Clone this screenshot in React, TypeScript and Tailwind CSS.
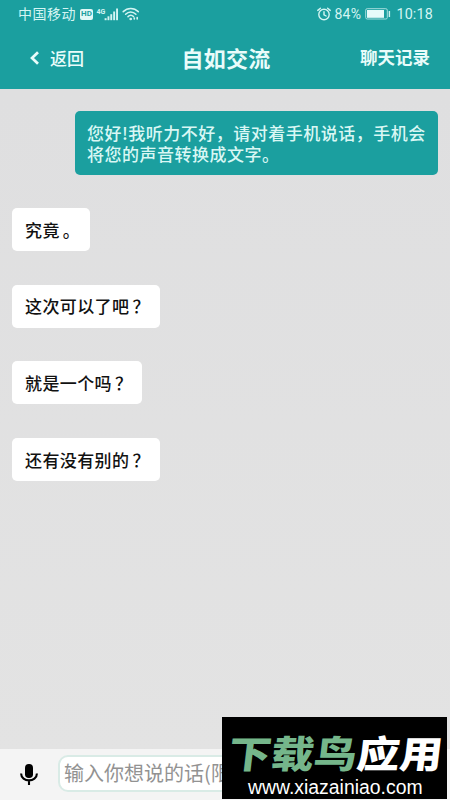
import type { ReactNode } from 'react';

const messages = [
  { text: '究竟', mark: '。' },
  { text: '这次可以了吧', mark: '？' },
  { text: '就是一个吗', mark: '？' },
  { text: '还有没有别的', mark: '？' },
];

function SignalIcon() {
  return (
    <svg width="24" height="15" viewBox="0 0 24 15" fill="#d4f5f3" className="ml-[3px]">
      <text x="0.5" y="6.5" fontSize="7" fontWeight="bold" fontFamily="Roboto, sans-serif">
        4G
      </text>
      <rect x="8.6" y="11.2" width="2" height="2" />
      <rect x="11.5" y="9.3" width="1.9" height="3.9" />
      <rect x="14.3" y="7.2" width="1.9" height="6" />
      <rect x="17.2" y="4.5" width="1.9" height="8.7" />
      <rect x="20.1" y="1.5" width="1.9" height="11.7" />
    </svg>
  );
}

function WifiIcon() {
  return (
    <svg
      width="18"
      height="14"
      viewBox="0 0 18 14"
      fill="none"
      stroke="#d4f5f3"
      strokeWidth="1.5"
      strokeLinecap="round"
      className="ml-[2px]">
      <path d="M1.2 4.6C5.5 0.3 12 0.3 16.3 4.6" />
      <path d="M3.6 7.2C6.6 4.1 10.8 4.1 13.9 7.2" />
      <path d="M6 9.6C7.8 7.8 9.8 7.8 11.5 9.6" />
      <circle cx="8.7" cy="12" r="0.6" fill="#d4f5f3" />
      <path d="M12.3 11v1M15.2 10.5v1.5" strokeWidth="1.6" />
    </svg>
  );
}

function AlarmIcon() {
  return (
    <svg
      width="14"
      height="14"
      viewBox="0 0 14 14"
      fill="none"
      stroke="#d4f5f3"
      strokeWidth="1.4"
      strokeLinecap="round">
      <circle cx="7" cy="7.5" r="5.2" />
      <path d="M7 4.8v3l2.1 1.2M0.8 3.4 3.4 1.2M10.6 1.2l2.6 2.2" />
    </svg>
  );
}

function MicIcon() {
  return (
    <svg width="20" height="24" viewBox="0 0 20 24" fill="none" className="ml-[19px]">
      <rect x="6" y="1" width="8" height="14" rx="3.8" fill="black" />
      <path d="M2.1 10.5c0 9.2 15.8 9.2 15.8 0M10 17.5V22" stroke="black" strokeWidth="2.1" />
    </svg>
  );
}

function Bubble({ children }: { children: ReactNode }) {
  return (
    <div className="flex h-[43px] items-center rounded-[5px] bg-white px-[13px] text-[17px] font-medium tracking-[0.4px] text-[#111] whitespace-nowrap">
      {children}
    </div>
  );
}

export default function App() {
  return (
    <div className="relative flex h-[800px] w-[450px] flex-col overflow-hidden bg-[#e1e1e1] font-['Noto_Sans_CJK_SC',sans-serif]">
      <header className="h-[89px] shrink-0 bg-[#1b9f9f]">
        <div className="flex h-[28px] items-center pl-[18px] pr-[17px] text-[#d4f5f3]">
          <span className="-mt-px text-[14px] tracking-[0.5px]">中国移动</span>
          <span className="ml-[4px] flex h-[11px] w-[13px] items-center justify-center rounded-[2px] bg-[#e0f8f7] font-[Roboto,sans-serif] text-[8px] font-bold text-[#1b9f9f]">
            HD
          </span>
          <SignalIcon />
          <WifiIcon />
          <div className="ml-auto flex items-center font-[Roboto,sans-serif] leading-[20px]">
            <AlarmIcon />
            <span className="ml-[3px] w-[29px] text-[14px] leading-[20px] tracking-[0.3px]">84%</span>
            <svg width="26" height="12" viewBox="0 0 26 12" className="ml-[2px]">
              <rect x="0.7" y="0.7" width="21.6" height="10.3" rx="1.5" fill="none" stroke="#a5dddd" />
              <rect x="2" y="2" width="17" height="7.8" fill="#e6fbfa" />
              <rect x="23.7" y="3" width="1.4" height="6" fill="#c9f1ef" />
            </svg>
            <span className="ml-[5px] text-[14.3px] leading-[20px] tracking-[0.2px]">10:18</span>
          </div>
        </div>
        <div className="grid h-[59px] grid-cols-3 items-center pl-[29px] pr-[20px] text-[#e9fcfa]">
          <div className="flex items-center">
            <svg width="12" height="14" viewBox="0 0 12 14" fill="none" stroke="#e9fcfa" strokeWidth="2.7">
              <path d="M9 1.2 3 7l6 5.8" />
            </svg>
            <span className="ml-[9px] text-[17px] font-medium">返回</span>
          </div>
          <h1 className="-ml-[7px] text-center text-[22px] font-bold tracking-[0.2px]">自如交流</h1>
          <span className="text-right text-[17.5px] font-bold">聊天记录</span>
        </div>
      </header>
      <main className="flex flex-1 flex-col items-start bg-linear-to-b from-[#dfdfe0] to-[#e3e3e3] px-[12px] pt-[22px]">
        <p className="h-[64px] w-[363px] self-end rounded-[5px] bg-[#1b9f9f] px-[12px] pt-[11px] text-[17px] leading-[21px] font-medium tracking-[0.5px] whitespace-nowrap text-[#d9f7f4]">
          您好!我听力不好，请对着手机说话，手机会
          <br />
          将您的声音转换成文字。
        </p>
        <div className="mt-[33px] flex flex-col items-start gap-[33.7px]">
          {messages.map(({ text, mark }) => (
            <Bubble key={text}>
              {text}
              <span className="relative left-[3px]">{mark}</span>
            </Bubble>
          ))}
        </div>
      </main>
      <footer className="flex h-[51px] shrink-0 items-center bg-[#f4f4f4]">
        <MicIcon />
        <div className="ml-[19px] -mt-[3px] flex h-[37px] w-[320px] items-center rounded-[10px] border-2 border-[#d9ebe6] bg-white pl-[4px] text-[20px] whitespace-nowrap text-[#929292]">
          输入你想说的话(限
        </div>
      </footer>
      {/* site badge over the bottom bar */}
      <div className="absolute left-[222px] top-[717px] h-[82px] w-[225px] overflow-hidden bg-black text-white">
        <div className="absolute left-[7px] top-[9px] -skew-x-6 scale-y-88 text-[42.8px] leading-[50px] font-black whitespace-nowrap">
          <span className="text-[#75b68b]">下载鸟</span>应用
        </div>
        <div className="absolute left-[26px] top-[60px] font-['Liberation_Sans',sans-serif] text-[19.4px] leading-[20px] whitespace-nowrap">
          www.xiazainiao.com
        </div>
      </div>
    </div>
  );
}
